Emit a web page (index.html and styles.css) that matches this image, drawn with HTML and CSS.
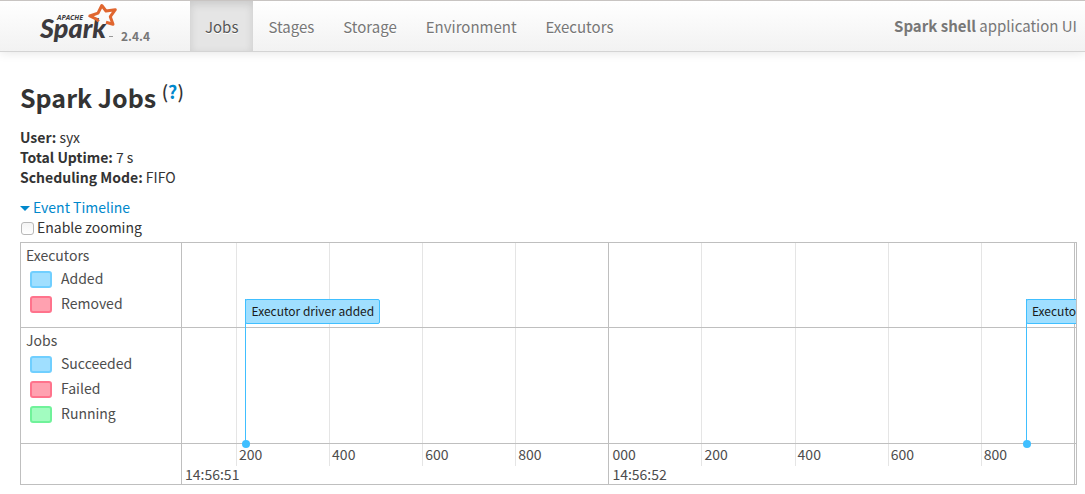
FILE: index.html
```html
<!DOCTYPE html>
<html lang="en">
<head>
<meta charset="utf-8">
<title>Spark shell - Spark Jobs</title>
<link rel="stylesheet" href="styles.css">
</head>
<body>
<header class="navbar">
  <a class="brand" href="#">
    <svg class="logo" viewBox="0 0 80 44" width="80" height="44" role="img" aria-label="Apache Spark">
      <text class="logo-word" x="1" y="37">Spark</text>
      <text class="logo-apache" x="18" y="19">APACHE</text>
      <path class="logo-star" d="M59.500 20.500L58 18.300L50.800 15L59 12.200L62.800 4.500L67 10L76.300 8.700L71.300 15.700L74 23.300L67 21.300"/>
      <path class="logo-tm" d="M70 35.500h4"/>
    </svg>
    <span class="version">2.4.4</span>
  </a>
  <nav class="nav">
    <a class="tab active" href="#">Jobs</a>
    <a class="tab" href="#">Stages</a>
    <a class="tab" href="#">Storage</a>
    <a class="tab" href="#">Environment</a>
    <a class="tab" href="#">Executors</a>
  </nav>
  <p class="app-name"><strong>Spark shell</strong> application UI</p>
</header>
<main class="page">
  <h1 class="title">Spark Jobs <sup class="help">(<a href="#">?</a>)</sup></h1>
  <ul class="summary">
    <li><strong>User:</strong> syx</li>
    <li><strong>Total Uptime:</strong> 7 s</li>
    <li><strong>Scheduling Mode:</strong> FIFO</li>
  </ul>
  <a class="toggle" href="#"><span class="caret"></span>Event Timeline</a>
  <label class="zooming"><input class="check" type="checkbox">Enable zooming</label>
  <section class="timeline">
    <div class="labels">
      <div class="group executors">
        <div class="group-name">Executors</div>
        <div class="key"><span class="swatch blue"></span>Added</div>
        <div class="key"><span class="swatch red"></span>Removed</div>
      </div>
      <div class="group jobs">
        <div class="group-name">Jobs</div>
        <div class="key"><span class="swatch blue"></span>Succeeded</div>
        <div class="key"><span class="swatch red"></span>Failed</div>
        <div class="key"><span class="swatch green"></span>Running</div>
      </div>
      <div class="axis-gap"></div>
    </div>
    <div class="plot">
      <div class="ticks">
        <div class="tick first"><span class="major-label">14:56:51</span></div>
        <div class="tick"><span>200</span></div>
        <div class="tick"><span>400</span></div>
        <div class="tick"><span>600</span></div>
        <div class="tick"><span>800</span></div>
        <div class="tick major"><span>000</span><span class="major-label">14:56:52</span></div>
        <div class="tick"><span>200</span></div>
        <div class="tick"><span>400</span></div>
        <div class="tick"><span>600</span></div>
        <div class="tick"><span>800</span></div>
        <div class="tick major last"></div>
      </div>
      <div class="rows">
        <div class="row executors"></div>
        <div class="row jobs"></div>
        <div class="axis-gap"></div>
      </div>
      <div class="event" style="left:7.1%"><span class="event-box">Executor driver added</span></div>
      <div class="event" style="left:94.4%"><span class="event-box">Executor 0 added</span></div>
    </div>
  </section>
</main>
</body>
</html>
```
FILE: styles.css
```css
* { box-sizing: border-box; }
body {
  margin: 0;
  background: #fff;
  color: #333;
  font: 14px/20px "Noto Sans CJK SC", "Noto Sans", sans-serif;
}
a { color: #0088cc; text-decoration: none; }
.navbar {
  display: flex;
  height: 52px;
  border-top: 1px solid #c8c4c2;
  border-bottom: 1px solid #d4d4d4;
  background: linear-gradient(#fff, #f2f2f2);
  box-shadow: 0 1px 10px rgba(0, 0, 0, .1);
  color: #777;
  font-size: 15px;
}
.brand { display: flex; width: 190px; padding-left: 39px; color: #777; }
.logo { flex: none; overflow: visible; }
.logo-word { font: italic 900 27px Lato, sans-serif; fill: #3c3a3e; }
.logo-apache { font: italic 700 7px "Open Sans", sans-serif; fill: #3c3a3e; }
.logo-star { fill: none; stroke: #e0662f; stroke-width: 3; stroke-linejoin: round; }
.logo-tm { stroke: #999; stroke-width: 1; }
.version { margin-top: 25px; padding-left: 2px; font-size: 12px; font-weight: 700; }
.nav { display: flex; }
.tab { padding: 16px 14px 14px 15px; color: #777; text-shadow: 0 1px 0 #fff; }
.tab.active { padding-right: 15px; background: #e5e5e5; box-shadow: inset 0 3px 8px rgba(0, 0, 0, .125); color: #555; }
.app-name { margin: 15px 8px 0 auto; }
.page { padding: 0 8px 0 20px; }
.title { margin: 25px 0 10px; font-size: 25px; line-height: 40px; }
.help { font-size: 18px; line-height: 0; font-weight: 500; }
.help a { font-weight: 700; }
.summary { margin: 0 0 10px; padding: 0; list-style: none; }
.toggle { display: flex; align-items: center; gap: 3px; }
.caret { margin-top: 2px; border: 5px solid transparent; border-top-color: #0088cc; border-bottom: 0; }
.zooming { display: flex; align-items: center; gap: 3px; }
.check {
  width: 13px; height: 13px; margin: 3px 0 0 1px;
  appearance: none;
  border: 1px solid #b8b8b8; border-radius: 3px;
  background: linear-gradient(#f4f4f4, #fff);
}
.timeline { display: flex; margin-top: 5px; border: 1px solid #bfbfbf; color: #4d4d4d; }
.labels { flex: none; width: 161px; border-right: 1px solid #bfbfbf; }
.executors { height: 85px; border-bottom: 1px solid #bfbfbf; }
.jobs { height: 116px; border-bottom: 1px solid #bfbfbf; }
.axis-gap { height: 40px; }
.group { padding: 2px 5px; }
.key { display: flex; align-items: center; height: 25px; gap: 9px; padding-left: 4px; }
.swatch { width: 22px; height: 17px; margin-top: 4px; border: 2px solid; border-radius: 3px; }
.blue { border-color: #70cfff; background: #a0dfff; }
.red { border-color: #ff738c; background: #ffa1b0; }
.green { border-color: #70f29a; background: #a2fcc0; }
.plot { position: relative; flex: 1; min-width: 0; overflow: hidden; }
.ticks {
  position: absolute; inset: 0;
  display: grid;
  grid-template-columns: 540fr repeat(9, 931fr) 21fr;
}
.tick {
  display: flex; flex-direction: column;
  min-width: 0; height: 223px; padding: 201px 0 0 2px;
  border-left: 1px solid #e5e5e5;
}
.tick.major { height: auto; padding-left: 3px; border-color: #bfbfbf; }
.tick.first { height: auto; padding-top: 221px; padding-left: 3px; border: 0; }
.tick.last { padding-left: 0; }
.rows { position: relative; }
.event { position: absolute; top: 56px; height: 145px; border-left: 1px solid #40bfff; }
.event::after {
  content: ""; position: absolute; left: -4px; bottom: -4px;
  width: 8px; height: 8px; border-radius: 50%; background: #40bfff;
}
.event-box {
  display: block; height: 25px; margin-left: -1px; padding: 0 5px;
  border: 1px solid #40bfff; border-radius: 2px;
  background: #a0dfff; color: #1a1a1a;
  font-size: 12px; line-height: 22px; white-space: nowrap;
}
```
